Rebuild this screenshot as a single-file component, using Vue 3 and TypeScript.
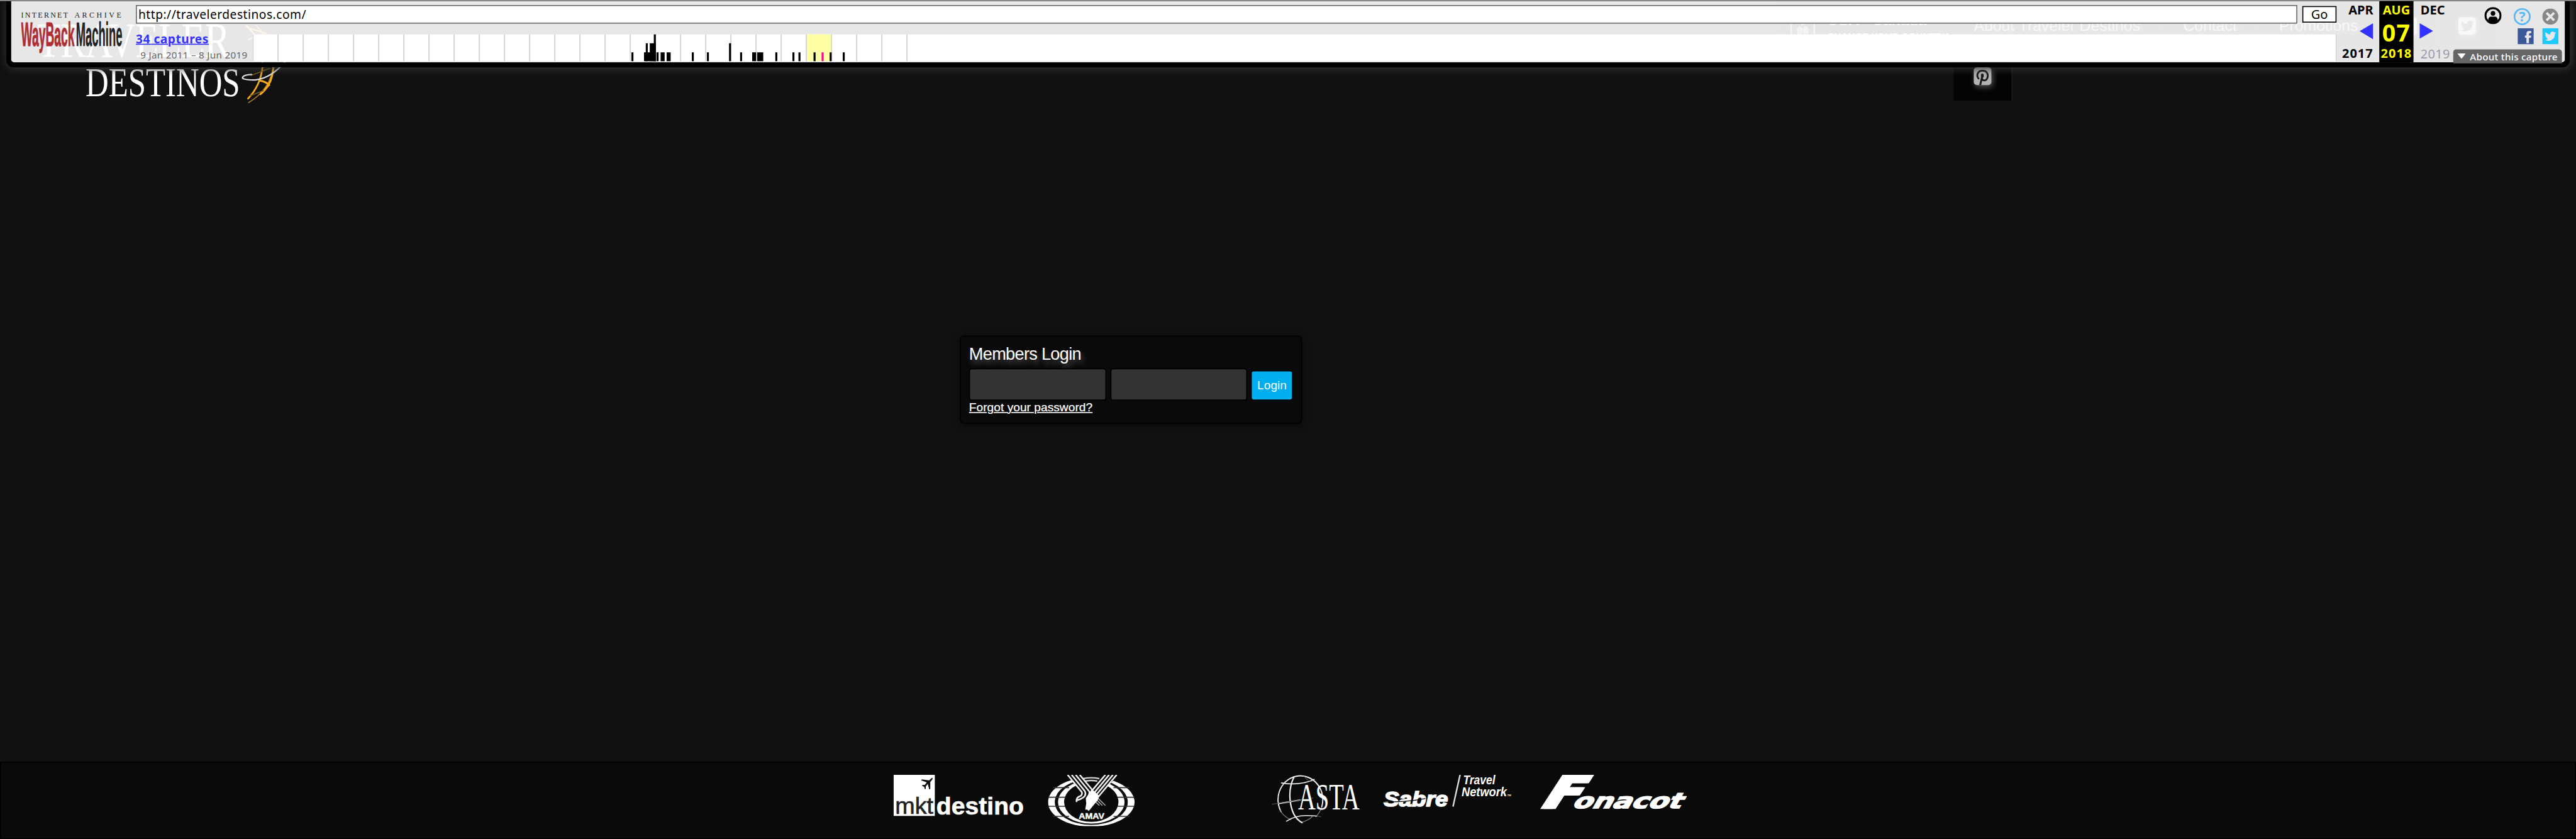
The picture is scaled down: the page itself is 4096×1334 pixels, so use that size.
<script setup lang="ts">
interface Bar {
  x: number
  w: number
  h: number
  hit?: boolean
}

const LOW = 18
const MID = 36
const FULL = 54

// Capture histogram, offsets measured from the start of the timeline
const bars: Bar[] = [
  { x: 753.5, w: 4, h: LOW },
  { x: 778.5, w: 24, h: LOW },
  { x: 782, w: 4, h: MID },
  { x: 790, w: 12, h: MID },
  { x: 798, w: 4, h: FULL },
  { x: 803.5, w: 4, h: LOW },
  { x: 811.5, w: 8, h: LOW },
  { x: 823.5, w: 8, h: LOW },
  { x: 873.5, w: 4, h: LOW },
  { x: 903.5, w: 4, h: LOW },
  { x: 947.5, w: 4, h: MID },
  { x: 969.5, w: 4, h: LOW },
  { x: 993.5, w: 8, h: LOW },
  { x: 1003.5, w: 12, h: LOW },
  { x: 1039.5, w: 4, h: LOW },
  { x: 1073.5, w: 4, h: LOW },
  { x: 1085.5, w: 4, h: LOW },
  { x: 1115.5, w: 4, h: LOW },
  { x: 1131.5, w: 4, h: LOW, hit: true },
  { x: 1147.5, w: 4, h: LOW },
  { x: 1173.5, w: 4, h: LOW },
]
const yearLines: number[] = Array.from({ length: 27 }, (_, i) => i * 50)

const bird =
  'M24 2.4a10 10 0 0 1-2.8.8A5 5 0 0 0 23.3.4a10 10 0 0 1-3.1 1.2 4.9 4.9 0 0 0-8.4 4.5A14 14 0 0 1 1.7.9a4.9 4.9 0 0 0 1.5 6.6 5 5 0 0 1-2.2-.6 4.9 4.9 0 0 0 4 4.9 5 5 0 0 1-2.2.1 4.9 4.9 0 0 0 4.6 3.4A10 10 0 0 1 0 17.3 14 14 0 0 0 21.5 4.8 10 10 0 0 0 24 2.4z'
</script>

<template>
  <div class="frame">
    <div class="page">
      <header class="site-head">
        <svg class="brand" width="600" height="210" viewBox="0 0 600 210">
          <g fill="#fff" font-family="'Liberation Serif', serif">
            <text x="74" y="113" font-size="97" textLength="383" lengthAdjust="spacingAndGlyphs">TRAVELER</text>
            <text x="170" y="191" font-size="83" textLength="307" lengthAdjust="spacingAndGlyphs">DESTINOS</text>
          </g>
          <g fill="none" stroke-linecap="round">
            <path d="M490 51Q522 80 522 132Q518 170 493 196" stroke="#f3ab1c" stroke-width="3.4" />
            <path d="M544 128Q538 178 494 204" stroke="#a97a20" stroke-width="2" />
            <path d="M509 50Q530 70 538 100" stroke="#d9981c" stroke-width="2" />
            <path d="M544 128Q542 156 533 170Q526 180 518 187" stroke="#f3ab1c" stroke-width="4" />
            <path d="M516 160Q528 162 535 169" stroke="#f3ab1c" stroke-width="4" />
            <path d="M498 57L529 66M494 79L526 66" stroke="#d9981c" stroke-width="3" />
            <path d="M499 150L536 136M498 190L524 180" stroke="#7a5a1c" stroke-width="2" />
            <path d="M568 121Q540 155 508 159Q484 159 482 155Q482 149 500 148" stroke="#ddd" stroke-width="2.8" />
          </g>
        </svg>
        <div class="country">
          <svg width="50" height="50" viewBox="0 0 50 50"><rect x="2" y="2" width="46" height="46" rx="4" fill="none" stroke="#999" stroke-width="3" /><ellipse cx="25" cy="14" rx="6" ry="10" fill="#888" /><ellipse cx="19" cy="34" rx="6" ry="9" fill="#888" /><ellipse cx="31" cy="34" rx="6" ry="9" fill="#888" /></svg>
          <div class="country-text"><b>USA - Canada</b><span>CHANGE YOUR COUNTRY</span></div>
        </div>
        <nav class="menu">
          <a class="item about"><span>About Traveler Destinos</span></a>
          <a class="item contact"><span>Contact</span></a>
          <a class="item promo"><span>Promotions</span></a>
          <a class="item social"><i class="chip"></i></a>
          <a class="item social">
            <i class="chip"><svg width="26" height="22" viewBox="0 0 24 20"><path fill="#222" :d="bird" /></svg></i>
          </a>
          <a class="item social">
            <i class="chip pin"><svg width="35" height="35" viewBox="0 0 35 35"><g fill="none" stroke="#1c1c1c" stroke-linecap="round"><path d="M9.5 22C4.5 16 7.5 6.5 17.5 6.5C26.5 6.5 29.5 14 27 21C24.5 27.5 17 27 16.5 22" stroke-width="3.6" /><path d="M17 17L13 34" stroke-width="3.8" /><path d="M17 15v3" stroke-width="5.5" /></g></svg></i>
          </a>
        </nav>
      </header>

      <main class="content">
        <form class="login" @submit.prevent>
          <h3>Members Login</h3>
          <div class="fields">
            <input type="text" aria-label="user" />
            <input type="password" aria-label="password" />
            <button type="submit">Login</button>
          </div>
          <a class="forgot">Forgot your password?</a>
        </form>
      </main>

      <footer class="partners">
        <svg width="260" height="82" viewBox="0 0 260 82">
          <rect width="82" height="82" fill="#fff" />
          <path d="M78 6Q75 6 71 11L56 9L55 11L66 15L62 20L57 20L57 22L61 24L62 28L64 28L64 23L68 18L71 29L73 28L73 14Q78 9 78 6z" fill="#111" />
          <g font-family="'Liberation Sans', sans-serif">
            <text x="3" y="77.5" font-size="47" fill="#222" stroke="#222" stroke-width=".8" textLength="76" lengthAdjust="spacingAndGlyphs">mkt</text>
            <text x="85" y="79" font-size="49" font-weight="700" fill="#fff" stroke="#fff" stroke-width=".8" textLength="174" lengthAdjust="spacingAndGlyphs">destino</text>
          </g>
        </svg>
        <svg class="amav" width="172" height="102" viewBox="0 0 172 102">
          <ellipse cx="86" cy="54" rx="86" ry="49" fill="#fff" />
          <ellipse cx="86" cy="54" rx="72.5" ry="45.5" fill="#0a0a0a" />
          <ellipse cx="86" cy="54" rx="66" ry="43" fill="#fff" />
          <ellipse cx="86" cy="54" rx="54" ry="39.5" fill="#0a0a0a" />
          <path d="M0 44.5h34M0 62.5h34M138 44.5h34M138 62.5h34M10 25.5h32M130 25.5h32M10 82.5h32M130 82.5h32" stroke="#333" stroke-width="2" />
          <path d="M34 0H142L90 48z" fill="#0a0a0a" />
          <path d="M70 7.5Q86 4 102 7.5M74 12.5Q86 10 98 12.5" stroke="#ccc" stroke-width="3" fill="none" />
          <g fill="none" stroke="#f0f0f0" stroke-width="3.2">
            <path d="M39 0L67 34Q69 39 65 42Q55 45 57 54" />
            <path d="M47 0L73 32Q77 40 70 45Q62 50 58 50" />
            <path d="M55 0L82 33Q83 42 77 47" />
            <path d="M63 0L88 30" />
            <path d="M114 0L86 33M121.5 0L90 38M129 0L94 42M136.5 0L98 46" />
            <path d="M99 46L114 61M96 49L108 61M93 52L102 61" stroke="#aaa" stroke-width="2" />
          </g>
          <path d="M75 47L87 28L102 42L99 50L81 72L78 69L74 69L76 57z" fill="#fff" />
          <text x="61" y="88" font-size="17" font-weight="700" fill="#fff" stroke="#fff" stroke-width=".6" font-family="'Liberation Sans', sans-serif" textLength="51" lengthAdjust="spacingAndGlyphs">AMAV</text>
        </svg>
        <svg class="asta" width="180" height="97" viewBox="0 0 180 97">
          <g fill="none" stroke="#eee" stroke-linecap="round">
            <path d="M22 73A44.5 47.5 0 1 1 103 64" stroke-width="2.4" />
            <path d="M20 70Q28 84 42 89M103 66Q98 76 92 83M61 95Q78 90 84 83" stroke="#888" stroke-width="1.5" />
            <path d="M48 4Q38 24 40 48Q43 84 64 95" stroke-width="2.8" />
            <path d="M23 16Q60 22 88 9" stroke-width="2.2" />
            <path d="M17 57L60 50" stroke-width="2.6" />
            <path d="M4 58.5L86 46" stroke="#555" stroke-width="1.3" />
            <path d="M33 92Q50 81 72 81Q86 81 93 82" stroke-width="2" />
            <path d="M93 82L101 83M68 3Q76 14 84 13" stroke="#666" stroke-width="1.2" />
          </g>
          <text x="56" y="69" font-size="74" fill="#fff" font-family="'Liberation Serif', serif" textLength="122" lengthAdjust="spacingAndGlyphs">ASTA</text>
        </svg>
        <svg class="sabre" width="256" height="64" viewBox="0 0 256 64">
          <g fill="#fff" font-family="'Liberation Sans', sans-serif" font-weight="700" font-style="italic">
            <text x="1" y="62.5" font-size="41" stroke="#fff" stroke-width="2" textLength="128" lengthAdjust="spacingAndGlyphs">Sabre</text>
            <text x="159" y="18.5" font-size="26" textLength="64" lengthAdjust="spacingAndGlyphs">Travel</text>
            <text x="156" y="42" font-size="25" textLength="90" lengthAdjust="spacingAndGlyphs">Network</text>
            <text x="247" y="42" font-size="5">TM</text>
          </g>
          <path d="M0 54Q50 54 84 47" fill="none" stroke="#0a0a0a" stroke-width="1.4" />
          <path d="M153 0L139 63" stroke="#ddd" stroke-width="3" />
        </svg>
        <svg class="fonacot" width="297" height="68" viewBox="0 0 297 68">
          <g fill="#fff" stroke="#fff" font-family="'DejaVu Sans', sans-serif" font-weight="700">
            <text transform="translate(-1 66) skewX(-33)" font-size="88" stroke-width="4" textLength="74" lengthAdjust="spacingAndGlyphs">F</text>
            <text transform="translate(6 66) skewX(-33)" font-size="88" stroke-width="4" textLength="70" lengthAdjust="spacingAndGlyphs" aria-hidden="true">F</text>
            <text transform="translate(67 66.5) skewX(-30)" font-size="42" stroke-width="2" textLength="216" lengthAdjust="spacingAndGlyphs">onacot</text>
          </g>
        </svg>
      </footer>

      <section class="wm">
        <div class="wm-body">
          <svg class="wm-logo" width="204" height="84" viewBox="0 0 204 84">
            <text x="0" y="11" font-size="15" fill="#222" font-family="'Liberation Serif', serif" textLength="93">INTERNET</text>
            <text x="106" y="11" font-size="15" fill="#222" font-family="'Liberation Serif', serif" textLength="93">ARCHIVE</text>
            <g font-family="'Liberation Sans', sans-serif" font-weight="700">
              <text x="0" y="67" font-size="66" fill="#ad2f34" stroke="#ad2f34" stroke-width="1.2" textLength="106" lengthAdjust="spacingAndGlyphs">WayBack</text>
              <text x="109" y="67" font-size="66" fill="#222" stroke="#222" stroke-width=".6" textLength="92" lengthAdjust="spacingAndGlyphs">Machine</text>
            </g>
          </svg>
          <div class="wm-main">
            <div class="url-row">
              <div class="url">http://travelerdestinos.com/</div>
              <div class="go">Go</div>
            </div>
            <div class="cap-row">
              <div class="caps">
                <a><span>34 captures</span></a>
                <p><span>9 Jan 2011 – 8 Jun 2019</span></p>
              </div>
              <svg class="spark" width="4142" height="54">
                <rect width="4142" height="54" fill="#fff" />
                <rect x="1101.5" width="48" height="54" fill="#ffffa5" />
                <rect v-for="x in yearLines" :key="x" :x="x - 0.5" width="2.4" height="54" fill="#d4d4d4" />
                <rect v-for="(b, i) in bars" :key="'b' + i" :x="b.x - 0.5" :y="54 - b.h" :width="b.w" :height="b.h" :fill="b.hit ? '#ff0099' : '#000'" />
                <rect x="4140.5" width="1.5" height="54" fill="#ccc" />
              </svg>
            </div>
          </div>
          <div class="dates">
            <div class="col prev"><b>APR</b><i></i><b class="yr">2017</b></div>
            <div class="col cur"><b>AUG</b><strong>07</strong><b class="yr">2018</b></div>
            <div class="col next"><b>DEC</b><i></i><span class="yr">2019</span></div>
          </div>
          <div class="tools">
            <div class="row one">
              <svg width="34" height="34" viewBox="0 0 34 34"><circle cx="17" cy="17" r="15" fill="none" stroke="#000" stroke-width="4" /><circle cx="17" cy="12.5" r="4.6" /><path d="M7.5 29V25Q8.5 19 13 19H21Q25.5 19 26.5 25V29Q17 33 7.5 29z" /></svg>
              <svg class="help" width="34" height="34" viewBox="0 0 34 34"><circle cx="17" cy="17" r="15.2" fill="none" stroke="#58b8f8" stroke-width="3.4" /><text x="17" y="27" text-anchor="middle" font-size="27" font-weight="700" fill="#58b8f8" font-family="'Noto Sans', sans-serif">?</text></svg>
              <svg class="close" width="32" height="32" viewBox="0 0 32 32"><circle cx="16" cy="16" r="16" fill="#888" /><path d="M8.5 8.5L23.5 23.5M23.5 8.5L8.5 23.5" stroke="#e8e8e8" stroke-width="4.6" /></svg>
            </div>
            <div class="row two">
              <svg width="32" height="32" viewBox="0 0 32 32"><rect width="32" height="32" fill="#3b5998" /><path fill="#e8e8e8" d="M17.500 30V19H14.500V14.500H17.500V11Q17.500 5.500 23.500 5.500H27V10H24.500Q22.500 10 22.500 12V14.500H27L26.300 19H22.500V30z" /></svg>
              <svg width="32" height="32" viewBox="0 0 32 32"><rect width="32" height="32" fill="#1dcaff" /><path transform="translate(5 7) scale(.93)" fill="#e8e8e8" :d="bird" /></svg>
            </div>
            <div class="about-cap"><i></i><span>About this capture</span></div>
          </div>
        </div>
      </section>
    </div>
  </div>
</template>

<style>
body {
  background: #111;
  overflow: hidden;
}
</style>

<style scoped>
* {
  box-sizing: border-box;
}
svg {
  display: block;
  flex: none;
}
.frame {
  width: 4096px;
  height: 1334px;
  overflow: hidden;
}
.page {
  position: relative;
  display: flex;
  flex-direction: column;
  width: 5120px;
  height: 1668px;
  transform: scale(0.8);
  transform-origin: 0 0;
  background: #111;
  font-family: 'Liberation Sans', Arial, sans-serif;
  color: #fff;
}

/* site header */
.site-head {
  display: flex;
  height: 210px;
}
.country {
  display: flex;
  margin-left: 2935px;
  width: 348px;
  height: 100px;
  padding: 27px 0 0 23px;
  gap: 24px;
  background: #030303;
}
.country-text {
  display: flex;
  flex-direction: column;
  white-space: nowrap;
}
.country-text b {
  font-size: 30px;
  line-height: 26px;
}
.country-text span {
  margin-top: 9px;
  font-size: 19px;
  font-weight: 700;
  line-height: 22px;
}
.menu {
  display: flex;
  flex-wrap: wrap;
  align-content: flex-start;
  width: 1110px;
}
.item {
  height: 100px;
  background: #040404;
  border-right: 2px solid #1c1c1c;
  color: #b3b3b3;
  font-size: 31px;
  line-height: 34px;
  padding-top: 34px;
  white-space: nowrap;
  text-shadow: 4px 4px 12px #555;
}
.item.about {
  width: 415px;
  padding-left: 40px;
}
.item.contact {
  width: 190px;
  padding-left: 41px;
}
.item.promo {
  width: 241px;
  padding-left: 42px;
}
.item.social {
  width: 117px;
  padding-left: 40px;
}
.chip {
  display: flex;
  align-items: center;
  justify-content: center;
  width: 35px;
  height: 35px;
  border-radius: 6px;
  background: #b3b3b3;
  box-shadow: 3px 4px 12px #555;
}

/* login */
.content {
  flex: 1;
  padding: 457px 0 0 1908px;
}
.login {
  width: 680px;
  height: 175px;
  padding: 17px 16px 0;
  border: 2px solid #000;
  border-radius: 8px;
  background: #0a0a0a;
  box-shadow: 0 4px 14px rgba(0, 0, 0, 0.5);
}
h3 {
  margin: 0;
  font-size: 34px;
  font-weight: 400;
  line-height: 34px;
  height: 46px;
  letter-spacing: -0.9px;
  text-shadow: 4px 8px 10px #555;
}
.fields {
  display: flex;
  align-items: flex-end;
  height: 64px;
}
.fields input {
  width: 274px;
  height: 64px;
  margin: 0 7px 0 0;
  padding: 0;
  border: 2px solid #000;
  border-radius: 6px;
  background: #333;
}
.fields input:nth-child(2) {
  margin-left: 1px;
}
.fields button {
  width: 84px;
  height: 60px;
  padding: 0;
  border: 2px solid #000;
  border-radius: 6px;
  background: #00aeef;
  color: #fff;
  font: 24px/56px 'Liberation Sans', Arial, sans-serif;
}
.forgot {
  display: block;
  font-size: 24px;
  line-height: 28px;
  -webkit-text-stroke: 0.3px #fff;
  text-decoration: underline;
  text-decoration-thickness: 2px;
}

/* partners */
.partners {
  display: flex;
  align-items: flex-start;
  height: 154px;
  padding: 24px 0 0 1774px;
  border: 2px solid #000;
  background: #0a0a0a;
}
.amav {
  margin-left: 47px;
}
.asta {
  margin-left: 269px;
}
.sabre {
  margin-left: 45px;
}
.fonacot {
  margin-left: 51px;
}

/* archive toolbar, floats over the site */
.wm {
  position: absolute;
  top: 0;
  left: 0;
  width: 5120px;
  height: 160px;
  padding: 0 12px;
  overflow: hidden;
  border-top: 2px solid #999;
  font-family: 'Noto Sans', 'DejaVu Sans', sans-serif;
  color: #000;
}
.wm-body {
  display: flex;
  height: 132px;
  border: 10px solid #000;
  border-top: 0;
  border-radius: 0 0 16px 16px;
  background: rgba(255, 255, 255, 0.9);
  background-clip: padding-box;
  box-shadow: 2px 2px 16px #3a3a3a;
}
.wm-logo {
  margin: 22px 0 0 20px;
}
.wm-main {
  margin-left: 24px;
  width: 4374px;
}
.url-row {
  display: flex;
  padding-top: 8px;
  gap: 10px;
}
.url {
  width: 4296px;
  height: 37px;
  padding-left: 3px;
  border: 2px solid #666;
  background: #fff;
  font-size: 24px;
  line-height: 31px;
  letter-spacing: 0.6px;
}
.go {
  width: 68px;
  height: 33px;
  margin-top: 2px;
  border: 2px solid #000;
  background: #fff;
  font-size: 25px;
  line-height: 27px;
  text-align: center;
}
.cap-row {
  display: flex;
  margin-top: 21px;
}
.caps {
  width: 232px;
  white-space: nowrap;
}
.caps a {
  display: block;
  color: #33f;
  font-size: 24px;
  font-weight: 700;
  line-height: 18px;
  letter-spacing: 0.6px;
  text-decoration: underline;
  text-decoration-thickness: 2px;
}
.caps p {
  margin: 12px 0 0 9px;
  color: #666;
  font-size: 19px;
  line-height: 22px;
  letter-spacing: 0.38px;
}
.dates {
  display: flex;
}
.col {
  display: flex;
  flex-direction: column;
  height: 122px;
  font-size: 25px;
  line-height: 35px;
  white-space: nowrap;
}
.prev {
  width: 85px;
  padding-right: 12px;
  align-items: flex-end;
}
.cur {
  width: 68px;
  align-items: center;
  background: #000;
  color: #ff0;
}
.cur strong {
  height: 51px;
  font-size: 47px;
  line-height: 54px;
  letter-spacing: 1.4px;
}
.next {
  width: 69px;
  padding-left: 14px;
  align-items: flex-start;
}
.col .yr {
  letter-spacing: 1.2px;
}
.next .yr {
  margin-top: 2px;
  letter-spacing: 0.4px;
  color: #99a;
}
.col i {
  width: 27px;
  height: 32px;
  margin: 9px 0 10px;
  background: #33f;
}
.prev i {
  clip-path: polygon(100% 0, 100% 100%, 0 50%);
}
.next i {
  margin-left: -2px;
  clip-path: polygon(0 0, 100% 50%, 0 100%);
}
.tools {
  width: 232px;
}
.row {
  display: flex;
}
.one {
  padding: 12px 0 0 72px;
  height: 54px;
}
.help {
  margin: 2px 0 0 24px;
}
.close {
  margin: 3px 0 0 23px;
}
.two {
  gap: 17px;
  padding-left: 138px;
  height: 42px;
}
.about-cap {
  display: flex;
  position: relative;
  width: 216px;
  height: 28px;
  margin-left: 10px;
  padding-left: 8px;
  border-radius: 6px 6px 0 0;
  background: #666;
  color: #fff;
  font-size: 19px;
  font-weight: 500;
  line-height: 30px;
  letter-spacing: 0.35px;
  white-space: nowrap;
}
.about-cap i {
  width: 17px;
  height: 11px;
  margin: 8px 8px 0 0;
  background: #fff;
  clip-path: polygon(0 0, 100% 0, 50% 100%);
}
</style>
